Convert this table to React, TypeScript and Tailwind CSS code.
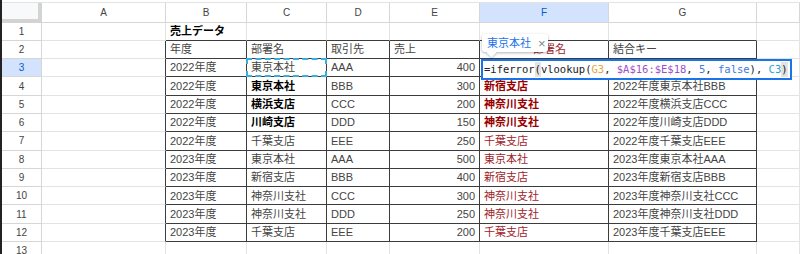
import React from "react";

type Tone = "n" | "b" | "rb" | "r";

type CellProps = {
  text?: string;
  tone?: Tone;
  right?: boolean;
  darkR?: boolean;
  darkB?: boolean;
  extra?: string;
};

const cols = "grid grid-cols-[42px_124px_81px_80px_63px_90px_129px_148px_1fr]";

const toneClass: Record<Tone, string> = {
  n: "text-[#444444]",
  b: "text-black font-bold",
  rb: "text-[#990000] font-bold",
  r: "text-[#a0232a]",
};

function Cell({ text, tone = "n", right, darkR, darkB, extra = "px-[4px]" }: CellProps) {
  return (
    <div
      className={
        "flex items-center overflow-hidden whitespace-nowrap text-[11px] border-r border-b " +
        extra +
        " " +
        (right ? "justify-end " : "") +
        (darkR ? "border-r-[#3c3c3c] " : "border-r-[#e2e3e3] ") +
        (darkB ? "border-b-[#3c3c3c] " : "border-b-[#e2e3e3] ") +
        toneClass[tone]
      }
    >
      {text}
    </div>
  );
}

const rows: [string, string, Tone, string, string, string, Tone, string][] = [
  ["2022年度", "東京本社", "n", "AAA", "400", "", "n", ""],
  ["2022年度", "東京本社", "b", "BBB", "300", "新宿支店", "rb", "2022年度東京本社BBB"],
  ["2022年度", "横浜支店", "b", "CCC", "200", "神奈川支社", "rb", "2022年度横浜支店CCC"],
  ["2022年度", "川崎支店", "b", "DDD", "150", "神奈川支社", "rb", "2022年度川崎支店DDD"],
  ["2022年度", "千葉支店", "n", "EEE", "250", "千葉支店", "r", "2022年度千葉支店EEE"],
  ["2023年度", "東京本社", "n", "AAA", "500", "東京本社", "r", "2023年度東京本社AAA"],
  ["2023年度", "新宿支店", "n", "BBB", "400", "新宿支店", "r", "2023年度新宿支店BBB"],
  ["2023年度", "神奈川支社", "n", "CCC", "300", "神奈川支社", "r", "2023年度神奈川支社CCC"],
  ["2023年度", "神奈川支社", "n", "DDD", "250", "神奈川支社", "r", "2023年度神奈川支社DDD"],
  ["2023年度", "千葉支店", "n", "EEE", "200", "千葉支店", "r", "2023年度千葉支店EEE"],
];

function RowHead({ n, active }: { n: number; active?: boolean }) {
  return (
    <div
      className={
        "ml-[2px] flex items-center justify-center text-[10px] border-b border-r border-[#d6d6d6] " +
        (active ? "bg-[#d3e3fd] text-[#0b57d0]" : "bg-white text-[#444444]")
      }
    >
      {n}
    </div>
  );
}

export default function App() {
  return (
    <div className="relative w-[800px] h-[254px] overflow-hidden bg-white pt-[2px] border-l-2 border-l-[#222] font-['Liberation_Sans','Noto_Sans_CJK_JP',sans-serif]">
      {/* column letters */}
      <div className={cols + " h-[20.5px] border-t border-[#e2e3e3] ml-[-2px]"}>
        <div className="bg-[#f8f9fa] border-r-[4px] border-b-[4px] border-[#d3d3d3] ml-[2px]" />
        {["A", "B", "C", "D", "E", "F", "G", ""].map((c) => (
          <div
            key={c || "h"}
            className={
              "flex items-center justify-center text-[10px] border-r border-b border-[#d6d6d6] " +
              (c === "F" ? "bg-[#d3e3fd] text-[#0b57d0]" : "bg-white text-[#444444]")
            }
          >
            {c}
          </div>
        ))}
      </div>

      {/* row 1 */}
      <div className={cols + " h-[18.3px] ml-[-2px]"}>
        <RowHead n={1} />
        <Cell />
        <Cell text="売上データ" tone="b" darkB />
        <Cell darkB />
        <Cell darkB />
        <Cell darkB />
        <Cell darkB />
        <Cell darkB />
        <Cell />
      </div>

      {/* row 2 */}
      <div className={cols + " h-[18.3px] ml-[-2px]"}>
        <RowHead n={2} />
        <Cell darkR />
        <Cell text="年度" darkR darkB />
        <Cell text="部署名" darkR darkB />
        <Cell text="取引先" darkR darkB />
        <Cell text="売上" darkR darkB />
        <Cell text="部署名" tone="r" darkR darkB extra="pl-[53px]" />
        <Cell text="結合キー" darkR darkB />
        <Cell />
      </div>

      {rows.map((r, i) => (
        <div key={i} className={cols + " h-[18.3px] ml-[-2px]"}>
          <RowHead n={i + 3} active={i === 0} />
          <Cell darkR />
          <Cell text={r[0]} darkR darkB />
          <div className="relative grid">
            <Cell text={r[1]} tone={r[2]} darkR darkB />
            {i === 0 && (
              <div className="absolute left-[-1px] top-[-1px] right-0 bottom-0 border-2 border-dashed border-[#3aaedc]" />
            )}
          </div>
          <Cell text={r[3]} darkR darkB />
          <Cell text={r[4]} right darkR darkB />
          <Cell text={r[5]} tone={r[6]} darkR darkB />
          <Cell text={r[7]} darkR darkB />
          <Cell />
        </div>
      ))}

      <div className={cols + " h-[18.3px] ml-[-2px]"}>
        <RowHead n={13} />
        <Cell />
        <Cell />
        <Cell />
        <Cell />
        <Cell />
        <Cell />
        <Cell />
        <Cell />
      </div>

      {/* formula editor over F3 */}
      <div className="absolute left-[479px] top-[59px] w-[311px] h-[21px] border-2 border-[#1a73e8] bg-white flex items-center pl-[1px] whitespace-nowrap text-[10.5px] text-[#202124] font-['DejaVu_Sans_Mono',monospace]">
        <span>=iferror</span>
        <span className="bg-[#e3e3e3]">(</span>
        <span>vlookup(</span>
        <span className="text-[#e8a33a]">G3</span>
        <span>,&nbsp;</span>
        <span className="text-[#9c4fc7]">$A$16:$E$18</span>
        <span>,&nbsp;</span>
        <span className="text-[#3b7be0]">5</span>
        <span>,&nbsp;</span>
        <span className="text-[#3b7be0]">false</span>
        <span>),&nbsp;</span>
        <span className="text-[#22a6d6]">C3</span>
        <span className="bg-[#e3e3e3]">)</span>
      </div>

      {/* value preview chip */}
      <div className="absolute left-[480px] top-[34px] w-[66px] h-[18px] flex items-center gap-[7px] pl-[5px] bg-white rounded-[3px] shadow-[0_1px_3px_rgba(0,0,0,0.3)]">
        <div className="absolute left-[6px] bottom-[-4px] w-[7px] h-[7px] rotate-45 bg-white shadow-[1px_1px_2px_rgba(0,0,0,0.2)]" />
        <span className="relative text-[11px] text-[#1a73e8]">東京本社</span>
        <span className="relative text-[13px] leading-none text-[#80868b]">×</span>
      </div>
    </div>
  );
}
